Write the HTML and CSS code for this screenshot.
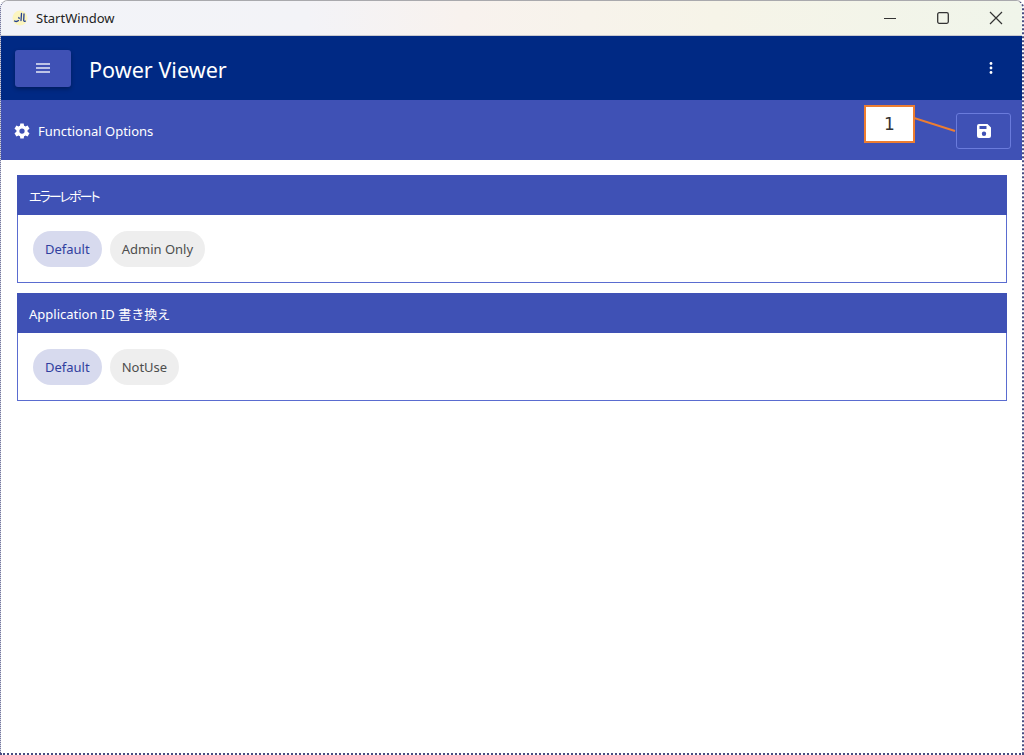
FILE: index.html
```html
<!DOCTYPE html>
<html lang="ja">
<head>
<meta charset="utf-8">
<title>StartWindow</title>
<link rel="stylesheet" href="styles.css">
</head>
<body>
<div class="window">
  <header class="titlebar">
    <div class="title-left">
      <span class="app-icon"><svg viewBox="0 0 16 16" width="16" height="16"><circle cx="8" cy="8" r="7.500" fill="#fbf5c0"/><path d="M2.500 11c1.500.8 3 .5 4-.4M6.800 7.500l.4 1M9.500 3.500l-.5 7M12 4l-.3 6.500c0 .8.800 1 1.600.6" fill="none" stroke="#24408f" stroke-width="1.300" stroke-linecap="round"/></svg></span>
      <span class="title-text">StartWindow</span>
    </div>
    <div class="window-controls">
      <svg width="14" height="14" viewBox="0 0 14 14"><path d="M1 7.500h12" stroke="#333" stroke-width="1.200"/></svg>
      <svg width="14" height="14" viewBox="0 0 14 14"><rect x="1.700" y="1.700" width="10.600" height="10.600" rx="1.500" fill="none" stroke="#333" stroke-width="1.300"/></svg>
      <svg width="14" height="14" viewBox="0 0 14 14"><path d="M1 1l12 12M13 1L1 13" stroke="#333" stroke-width="1.200"/></svg>
    </div>
  </header>
  <div class="appbar">
    <button class="menu-btn" type="button" aria-label="menu"><svg width="14" height="10" viewBox="0 0 14 10"><path d="M0 1h14M0 5h14M0 9h14" stroke="#e8eaf6" stroke-width="1.500"/></svg></button>
    <h1 class="app-title">Power Viewer</h1>
    <svg class="kebab" width="4" height="12" viewBox="0 0 4 12"><circle cx="2" cy="1.500" r="1.400" fill="#fff"/><circle cx="2" cy="6" r="1.400" fill="#fff"/><circle cx="2" cy="10.500" r="1.400" fill="#fff"/></svg>
  </div>
  <div class="subbar">
    <div class="sub-left">
      <svg width="18" height="18" viewBox="0 0 24 24"><path fill="#fff" fill-rule="evenodd" d="M19.400 13a7.600 7.600 0 0 0 0-2l2.600-2-2.500-4.300-3 1.200a7.500 7.500 0 0 0-1.800-1L14.300 2H9.700l-.4 3a7.500 7.500 0 0 0-1.800 1l-3-1.200L2 9l2.600 2a7.600 7.600 0 0 0 0 2L2 15l2.500 4.300 3-1.200a7.500 7.500 0 0 0 1.800 1l.4 2.900h4.600l.4-2.900a7.500 7.500 0 0 0 1.800-1l3 1.200L22 15zM12 15.500a3.500 3.500 0 1 1 0-7 3.500 3.500 0 0 1 0 7z"/></svg>
      <span class="sub-title">Functional Options</span>
    </div>
    <button class="save-btn" type="button" aria-label="save"><svg width="14" height="14" viewBox="0 0 14 14"><path fill="#fff" fill-rule="evenodd" d="M2 0h8.500L14 3.500V12a2 2 0 0 1-2 2H2a2 2 0 0 1-2-2V2a2 2 0 0 1 2-2zm.500 2v3h7V2zM7 7.500a2.200 2.200 0 1 0 0 4.400 2.200 2.200 0 0 0 0-4.400z"/></svg></button>
    <div class="callout">1</div>
    <svg class="callout-line" width="42" height="16" viewBox="0 0 42 16"><path d="M0 1l41 13" stroke="#ed7d31" stroke-width="2"/></svg>
  </div>
  <main class="content">
    <section class="card">
      <h2 class="card-head"><span class="kana">エラーレポート</span></h2>
      <div class="card-body">
        <span class="chip chip-on">Default</span>
        <span class="chip">Admin Only</span>
      </div>
    </section>
    <section class="card">
      <h2 class="card-head">Application ID 書き換え</h2>
      <div class="card-body">
        <span class="chip chip-on">Default</span>
        <span class="chip">NotUse</span>
      </div>
    </section>
  </main>
</div>
</body>
</html>
```
FILE: styles.css
```css
* { box-sizing: border-box; }
html, body { margin: 0; padding: 0; background: #fff; }
body { font-family: "Noto Sans", "Noto Sans CJK JP", sans-serif; }
.window {
  width: 1024px;
  height: 755px;
  display: flex;
  flex-direction: column;
  border-style: solid dotted dotted dotted;
  border-color: #a9a9ad #484c80 #484c80 #484c80;
  border-width: 1px 2px 2px 1px;
  border-radius: 8px 8px 0 0;
  overflow: hidden;
  background: #fff;
}
.titlebar {
  height: 35px;
  flex: none;
  display: flex;
  align-items: center;
  justify-content: space-between;
  background: linear-gradient(90deg, #f2f3f8 0%, #f3f3f7 30%, #f8f2ee 45%, #f6f4e8 70%, #f0f5ea 100%);
  border-bottom: 1px solid #c9c9cf;
}
.title-left { display: flex; align-items: center; gap: 8px; padding-left: 11px; }
.app-icon { display: flex; width: 16px; height: 16px; }
.title-text { font-size: 13px; color: #222; }
.window-controls { display: flex; gap: 39px; padding-right: 19px; }
.window-controls svg { display: block; }
.appbar {
  height: 64px;
  flex: none;
  display: flex;
  align-items: center;
  padding: 0 29px 0 14px;
  background: #002984;
}
.menu-btn {
  width: 56px;
  height: 37px;
  border: 0;
  border-radius: 3px;
  background: #3f51b5;
  box-shadow: 0 2px 4px rgba(0,0,0,.3);
  display: flex;
  align-items: center;
  justify-content: center;
  padding: 0;
}
.app-title { margin: 3px 0 0 18px; flex: 1; font-size: 21.600px; font-weight: 400; color: #fff; line-height: 1; }
.kebab { display: block; }
.subbar {
  position: relative;
  height: 60px;
  flex: none;
  display: flex;
  align-items: center;
  justify-content: space-between;
  padding: 0 11px 0 12px;
  background: #3f51b5;
}
.sub-left { display: flex; align-items: center; gap: 7px; margin-top: 2px; }
.sub-left svg { display: block; }
.sub-title { font-size: 13px; color: #fff; }
.save-btn {
  width: 55px;
  height: 36px;
  margin-top: 2px;
  border: 1px solid #6a7bdc;
  border-radius: 3px;
  background: transparent;
  display: flex;
  align-items: center;
  justify-content: center;
  padding: 0;
}
.callout {
  position: absolute;
  left: 863px;
  top: 5px;
  width: 51px;
  height: 38px;
  background: #fff;
  border: 2px solid #ed7d31;
  display: flex;
  align-items: center;
  justify-content: center;
  font-family: "DejaVu Sans", sans-serif;
  font-size: 17px;
  color: #333;
}
.callout-line { position: absolute; left: 913px; top: 17px; }
.content {
  flex: 1;
  padding: 15px 15px 0 16px;
  display: flex;
  flex-direction: column;
  gap: 10px;
  background: #fff;
}
.card { border: 1px solid #5a6cd0; border-top: 0; }
.card-head {
  margin: 0 -1px;
  height: 40px;
  display: flex;
  align-items: center;
  padding-left: 12px;
  background: #3f51b5;
  color: #fff;
  font-size: 13px;
  font-weight: 400;
}
.kana { font-feature-settings: "palt"; letter-spacing: -2px; }
.card-body { display: flex; gap: 8px; padding: 16px 15px 15px; }
.chip {
  height: 36px;
  display: flex;
  align-items: center;
  padding: 0 12px;
  border-radius: 18px;
  background: #eeeeee;
  color: #4d4d4d;
  font-size: 13px;
}
.chip-on { background: #d7daee; color: #303f9f; }
```
